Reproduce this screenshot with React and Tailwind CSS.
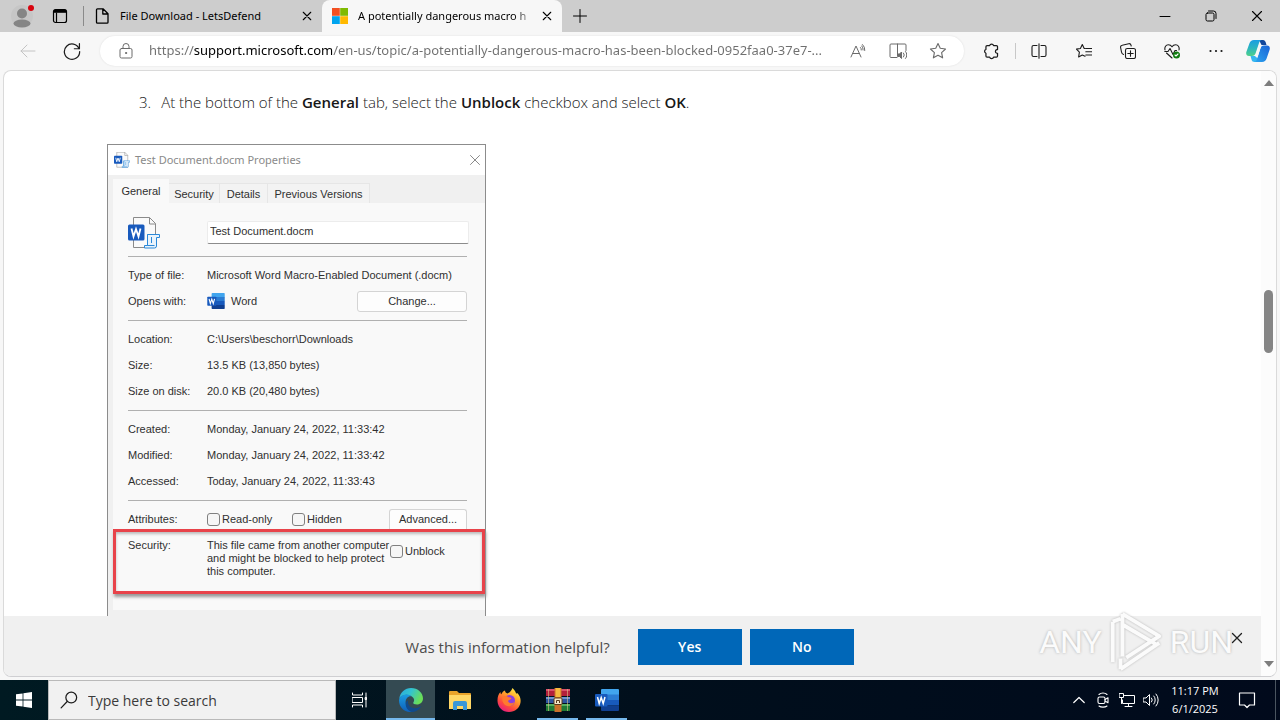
import React from 'react';

const UI = "font-['Open_Sans','Noto_Sans',sans-serif]";

function Stroke({ size = 'size-4', children, w = 1, box = '0 0 16 16', className = '' }) {
  return (
    <svg viewBox={box} className={`${size} shrink-0 ${className}`} fill="none" stroke="currentColor" strokeWidth={w} strokeLinecap="round" strokeLinejoin="round" aria-hidden="true">
      {children}
    </svg>
  );
}

function Cross({ size = 'size-3', w = 1 }) {
  return (
    <Stroke size={size} box="0 0 12 12" w={w}>
      <path d="M1.5 1.5l9 9M10.5 1.5l-9 9" />
    </Stroke>
  );
}

function WordTile({ className }) {
  return (
    <svg viewBox="0 0 24 22" className={className} aria-hidden="true">
      <path d="M7 0h16a1 1 0 0 1 1 1v5H6V1a1 1 0 0 1 1-1z" fill="#41a5ee" />
      <path d="M6 5.5h18V11H6z" fill="#2b7cd3" />
      <path d="M6 11h18v5.5H6z" fill="#185abd" />
      <path d="M6 16.5h18V21a1 1 0 0 1-1 1H7a1 1 0 0 1-1-1z" fill="#103f91" />
      <rect x="0" y="5" width="12.5" height="12.5" rx="1" fill="#185abd" />
      <path d="M2.5 8l1.7 6.5L6.2 8.500l2 6L10 8" fill="none" stroke="#fff" strokeWidth="1.5" />
    </svg>
  );
}

function DocmIcon({ className }) {
  return (
    <svg viewBox="0 0 32 32" className={className} fill="none" aria-hidden="true">
      <path d="M5.5 .5h16l6 6V30.500h-22z" fill="#fafafa" stroke="#8a8a8a" />
      <path d="M21.5 .5v6.500h6" stroke="#8a8a8a" />
      <rect x="0" y="7.500" width="16.500" height="16" rx="1.5" fill="#185abd" />
      <path d="M3.500 11.500l2 8L8 12l2.500 7.500 2-8" stroke="#fff" strokeWidth="1.800" />
      <path d="M19.500 17.500h12v3h-3v8.500a2 2 0 0 1-2 2h-10v-2.500h3z" fill="#e9f3fc" stroke="#2b88d8" />
      <path d="M19.500 17.500v11h7M23.500 20v6" stroke="#2b88d8" />
    </svg>
  );
}

function TabStrip() {
  return (
    <header className="flex h-8 shrink-0 items-stretch bg-[#cdcdcd] font-['Noto_Sans','Open_Sans',sans-serif]">
      <button aria-label="Profile" className="flex w-11 items-center justify-center">
        <svg viewBox="0 0 24 24" className="size-6" aria-hidden="true">
          <circle cx="12" cy="12" r="11" fill="#c6c6c6" />
          <circle cx="12" cy="9.5" r="5" fill="#858585" />
          <ellipse cx="12" cy="19.5" rx="8.5" ry="4" fill="#858585" />
          <circle cx="21" cy="4" r="3" fill="#d8040f" />
        </svg>
      </button>
      <button aria-label="Tab actions" className="flex w-8 items-center justify-center text-black">
        <Stroke w={1.2}>
          <rect x="1.5" y="1.5" width="13" height="13" rx="2" />
          <path d="M2 3.300h12" strokeWidth="3" strokeLinecap="butt" />
          <path d="M4.500 5v9.500" />
        </Stroke>
      </button>
      <div className="my-1.5 ml-[7px] w-px bg-[#8a8a8a]" />
      <div className="flex w-[238px] items-center pr-2.5 pl-2.5">
        <Stroke className="text-black" w={1.3}>
          <path d="M3.5 .8h5.5l5 5v8.400a1 1 0 0 1-1 1h-9.5a1 1 0 0 1-1-1V1.800a1 1 0 0 1 1-1zM8.800 1v5h5" />
        </Stroke>
        <span className="ml-2.5 flex-1 truncate text-[11px] text-black">File Download - LetsDefend</span>
        <button aria-label="Close tab" className="text-black"><Cross size="size-2.5" w={1.3} /></button>
      </div>
      <div className="flex w-60 items-center rounded-t-lg bg-[#f7f7f7] px-2.5">
        <svg viewBox="0 0 16 16" className="size-4" aria-hidden="true">
          <path d="M0 0h7.8v7.8H0z" fill="#f25022" />
          <path d="M8.200 0H16v7.8H8.200z" fill="#7fba00" />
          <path d="M0 8.200h7.8V16H0z" fill="#00a4ef" />
          <path d="M8.200 8.200H16V16H8.200z" fill="#ffb900" />
        </svg>
        <span className="ml-2.5 flex-1 overflow-hidden text-[11px] whitespace-nowrap text-black [mask-image:linear-gradient(to_right,#000_156px,transparent_178px)]">A potentially dangerous macro h</span>
        <button aria-label="Close tab" className="ml-2 text-black"><Cross size="size-2.5" w={1.3} /></button>
      </div>
      <button aria-label="New tab" className="flex w-9 items-center justify-center text-black">
        <Stroke><path d="M8 1.500v13M1.500 8h13" /></Stroke>
      </button>
      <div className="ml-auto flex text-black">
        <button aria-label="Minimize" className="flex w-[46px] items-center justify-center"><Stroke size="size-3" box="0 0 12 12"><path d="M1 6.500h10" /></Stroke></button>
        <button aria-label="Restore" className="flex w-[46px] items-center justify-center">
          <Stroke size="size-3" box="0 0 12 12"><rect x="1" y="3" width="8" height="8" rx="1.500" /><path d="M3.500 1h5a2.500 2.500 0 0 1 2.500 2.500v5" /></Stroke>
        </button>
        <button aria-label="Close" className="flex w-[46px] items-center justify-center"><Cross w={1.1} /></button>
      </div>
    </header>
  );
}

function CopilotLogo() {
  return (
    <svg viewBox="0 0 24 24" className="size-6" aria-hidden="true">
      <defs>
        <linearGradient id="cpA" x1="0" y1="0" x2="0" y2="1"><stop offset="0" stopColor="#1b9de2" /><stop offset=".5" stopColor="#2bb5c0" /><stop offset="1" stopColor="#4ed08a" /></linearGradient>
        <linearGradient id="cpB" x1="0" y1="1" x2="1" y2="0"><stop offset="0" stopColor="#2ba5ef" /><stop offset="1" stopColor="#1a62d6" /></linearGradient>
      </defs>
      <path d="M9 1h8c1.500 0 2.300 1 2.700 2.300L20.500 6h-5l-2-4z" fill="#12479c" />
      <path d="M15 23H8.500c-1.500 0-2.500-1-2.900-2.300L4.500 17h5z" fill="#35b7f0" />
      <path d="M8 1h7.500c-1.500.300-2 1.500-2.500 3l-3.300 10c-.700 2-1.700 3-3.700 3H3c-2.500 0-3.300-2-2.600-4.300L3.400 4.500C4.200 2.200 5.500 1 8 1z" fill="url(#cpA)" />
      <path d="M16 23H8.500c1.500-.300 2-1.500 2.500-3l3.300-10.500c.700-2 1.700-3 3.700-3h3c2.500 0 3.300 2 2.600 4.300l-3 8.700C19.800 21.800 18.500 23 16 23z" fill="url(#cpB)" />
      <path d="M13.800 7.500L10.600 17" stroke="#f7f7f7" strokeWidth="2.500" strokeLinecap="round" />
    </svg>
  );
}

const STAR = 'M8 1.300l2 4.300 4.700.600-3.500 3.200.900 4.700L8 11.800l-4.100 2.300.900-4.700L1.300 6.200 6 5.600z';

function IconButton({ label, children, className = 'w-[46px]' }) {
  return <button aria-label={label} className={`flex h-8 items-center justify-center ${className}`}>{children}</button>;
}

function Toolbar() {
  return (
    <nav className="flex h-[38px] shrink-0 items-center bg-[#f7f7f7] text-[#1b1b1b]">
      <IconButton label="Back" className="ml-1.5 w-11 text-[#c4c4c4]">
        <Stroke><path d="M15 8H1M7 2L1 8l6 6" /></Stroke>
      </IconButton>
      <IconButton label="Refresh" className="w-11">
        <Stroke size="size-[18px]" w={1.1}><path d="M14.300 6A6.800 6.800 0 1 0 14.800 8.500M14.600 1.500V6h-4.500" /></Stroke>
      </IconButton>
      <div className="ml-1.5 flex h-[30px] min-w-0 flex-1 items-center rounded-full bg-white pl-[18px] text-[#6b6b6b] shadow-[0_0_2px_#dcdcdc]">
        <Stroke><rect x="2" y="5.500" width="12" height="9.500" rx="1.500" /><path d="M5 5.500V3.500a3 3 0 0 1 6 0v2" /><circle cx="8" cy="10" r=".6" fill="currentColor" /></Stroke>
        <input
          aria-label="Address"
          className="ml-[15px] min-w-0 flex-1 bg-[linear-gradient(to_right,#6f6f6f_45px,#000_45px,#000_184px,#6f6f6f_184px)] bg-clip-text font-['Noto_Sans','Open_Sans',sans-serif] text-[13px] text-transparent outline-none"
          defaultValue="https://support.microsoft.com/en-us/topic/a-potentially-dangerous-macro-has-been-blocked-0952faa0-37e7-..."
        />
        <IconButton label="Read aloud" className="w-10">
          <Stroke><path d="M1 14L6 3l5 11M2.800 10.500h6.400M10.500 4.500a3 3 0 0 1 .8 2.500M12.500 1.500a7 7 0 0 1 2.300 6M11.800 3a5 5 0 0 1 1.300 4" /></Stroke>
        </IconButton>
        <IconButton label="Immersive reader" className="w-10">
          <Stroke size="size-[18px]" box="0 0 18 18"><path d="M8.500 2v12M8 15.500H2a1 1 0 0 1-1-1V3a1 1 0 0 1 1-1h14a1 1 0 0 1 1 1v5.500M14.500 11a3 3 0 0 1 0 4M16.500 9.500a5 5 0 0 1 0 7" /><path d="M9 12h1.500l2-2v6.500l-2-2H9z" fill="currentColor" /></Stroke>
        </IconButton>
        <IconButton label="Favorite this page" className="mr-1.5 w-10">
          <Stroke size="size-[18px]"><path d={STAR} /></Stroke>
        </IconButton>
      </div>
      <IconButton label="Extensions" className="ml-1 w-[46px]">
        <Stroke size="size-[18px]" w={1.1}><path d="M4.500 3.200h2.300a1.800 1.800 0 0 1 3.500 0h2.500a1 1 0 0 1 1 1v2.500h-.6a1.700 1.700 0 0 0 0 3.300h.6v2.500a1 1 0 0 1-1 1h-2.500a1.800 1.800 0 0 1-3.500 0H4.500a1 1 0 0 1-1-1V10a1.800 1.800 0 0 1 0-3.400V4.200a1 1 0 0 1 1-1z" /></Stroke>
      </IconButton>
      <div className="ml-px h-4 w-px bg-[#c8c8c8]" />
      <IconButton label="Split screen">
        <Stroke w={1.1}><path d="M6 2.500H2.500a1.500 1.500 0 0 0-1.500 1.500v8a1.500 1.500 0 0 0 1.500 1.500H6M10 2.500h3.500A1.500 1.500 0 0 1 15 4v8a1.500 1.500 0 0 1-1.500 1.500H10M8 .8v14.400" /></Stroke>
      </IconButton>
      <IconButton label="Favorites" className="w-11">
        <Stroke w={1.1}><path d="M9 5.500H8.200L6.300 1.500 4.400 5.500l-4 .6 3 3-.8 4.900 3.700-2L9 13.200M9.800 5.500h6M9.800 8.800h6M9.800 12h6" /></Stroke>
      </IconButton>
      <IconButton label="Collections" className="w-11">
        <Stroke w={1.1}><rect x="5.500" y="5.500" width="10" height="10" rx="1.800" /><path d="M10.500 7.800v5.400M7.800 10.500h5.400M3.500 11.500A3 3 0 0 1 1.500 9L.6 4.500a2 2 0 0 1 1.600-2.300l6.500-1.500a2 2 0 0 1 2.300 1.500l.2.800" /></Stroke>
      </IconButton>
      <IconButton label="Browser essentials" className="w-11">
        <Stroke w={1.1}><path d="M1 7C.3 4 2 1.800 4.300 1.800c1.700 0 3 .9 3.700 2 .7-1.100 2-2 3.700-2C14 1.800 15.700 4 15 7M2.500 10L8 15M.8 8.500H4L6 5.500l3 6 2-4h1.500" /><circle cx="12.500" cy="12" r="3.500" fill="#107c10" stroke="none" /><path d="M11 12l1 1 2-2" stroke="#fff" /></Stroke>
      </IconButton>
      <IconButton label="Settings and more" className="w-11">
        <Stroke><path d="M2.500 8h.01M8 8h.01M13.500 8h.01" strokeWidth="2.200" /></Stroke>
      </IconButton>
      <IconButton label="Copilot" className="w-10"><CopilotLogo /></IconButton>
      <div className="w-0.5" />
    </nav>
  );
}

function Row({ label, children }) {
  return (
    <div className="flex h-[26px] items-center">
      <dt className="w-[79px]">{label}</dt>
      <dd className="flex flex-1 items-center">{children}</dd>
    </div>
  );
}

const section = 'border-t border-[#b0b0b0] pt-[5px] pb-1.5';

function Check({ label }) {
  return (
    <label className="flex items-center gap-0.5">
      <input type="checkbox" className="size-[13px] appearance-none rounded-[3px] border border-[#808080] bg-[#f6f6f6]" />
      {label}
    </label>
  );
}

function PropertiesDialog() {
  return (
    <section aria-label="Test Document.docm Properties" className="ml-[103px] w-[379px] border border-[#8c8c8c] bg-[#f0f0f0] font-['Liberation_Sans',Arial,sans-serif] text-[11px] text-[#303030]">
      <div className="flex h-[30px] items-center bg-white pr-1 pl-1.5 text-[#8a8a8a]">
        <DocmIcon className="size-4" />
        <h2 className="ml-[5px] flex-1 font-['Noto_Sans',sans-serif] text-[11px]">Test Document.docm Properties</h2>
        <button aria-label="Close dialog"><Cross /></button>
      </div>
      <div className="flex items-end pt-1 pl-[5px]">
        <button className="h-6 w-14 bg-[#f9f9f9]">General</button>
        <button className="h-5 w-[51px] border-t border-r border-[#e6e6e6] bg-[#f3f3f3] pt-0.5">Security</button>
        <button className="h-5 w-12 border-t border-r border-[#e6e6e6] bg-[#f3f3f3] pt-0.5">Details</button>
        <button className="h-5 w-[102px] border-t border-r border-[#e6e6e6] bg-[#f3f3f3] pt-0.5">Previous Versions</button>
      </div>
      <div className="ml-[5px] bg-[#f9f9f9] pb-4">
        <div className="flex items-center pt-2.5 pr-4 pb-1 pl-[15px]">
          <DocmIcon className="size-8" />
          <input aria-label="File name" defaultValue="Test Document.docm" className="my-2 ml-[47px] h-[23px] min-w-0 flex-1 rounded-xs border border-[#ececec] border-b-[#8c8c8c] bg-white px-0.5 pb-1 outline-none" />
        </div>
        <dl className="pr-[18px] pl-[15px]">
          <div className={section}>
            <Row label="Type of file:">Microsoft Word Macro-Enabled Document (.docm)</Row>
            <Row label="Opens with:">
              <WordTile className="mr-1.5 h-4 w-[18px]" />
              <span className="flex-1">Word</span>
              <button className="h-[21px] w-[110px] rounded-[3px] border border-[#d4d4d4] bg-[#fdfdfd]">Change...</button>
            </Row>
          </div>
          <div className={section}>
            <Row label="Location:">C:\Users\beschorr\Downloads</Row>
            <Row label="Size:">13.5 KB (13,850 bytes)</Row>
            <Row label="Size on disk:">20.0 KB (20,480 bytes)</Row>
          </div>
          <div className={section}>
            <Row label="Created:">Monday, January 24, 2022, 11:33:42</Row>
            <Row label="Modified:">Monday, January 24, 2022, 11:33:42</Row>
            <Row label="Accessed:">Today, January 24, 2022, 11:33:43</Row>
          </div>
          <div className="border-t border-[#b0b0b0] pt-2">
            <div className="flex h-5 items-center">
              <dt className="w-[79px]">Attributes:</dt>
              <dd className="flex flex-1 items-center">
                <span className="w-[85px]"><Check label="Read-only" /></span>
                <Check label="Hidden" />
                <button className="ml-auto h-5 w-[78px] rounded-t-[3px] border border-b-0 border-[#d4d4d4] bg-[#fdfdfd]">Advanced...</button>
              </dd>
            </div>
          </div>
        </dl>
        <dl className="flex h-[65px] border-3 border-[#e8434a] pt-[7px] pl-3 leading-[13px] shadow-[1px_3px_3px_#999,inset_0_2px_3px_#bbb]">
          <dt className="w-[79px]">Security:</dt>
          <dd className="flex flex-1 items-start">
            <p className="w-[183px]">This file came from another computer and might be blocked to help protect this computer.</p>
            <div className="pt-1.5"><Check label="Unblock" /></div>
          </dd>
        </dl>
      </div>
      <div className="h-10" />
    </section>
  );
}

function Watermark() {
  return (
    <div className="pointer-events-none absolute right-[28px] bottom-0.5 flex items-center gap-1 font-['Roboto',sans-serif] text-[32px] leading-none text-[#fbfbfb] [text-shadow:0_0_3px_#b0b0b0]">
      <span>ANY</span>
      <svg viewBox="0 0 60 66" className="h-[64px] w-[60px] drop-shadow-[0_0_1px_#b5b5b5]" fill="none" stroke="#fbfbfb" strokeWidth="4" strokeLinejoin="round" aria-hidden="true">
        <path d="M6 12v42M16 4v44M16 4l38 23-34 22M16 15l34 20M6 12l8-3M14 61l40-27M14 61V50" />
      </svg>
      <span>RUN</span>
    </div>
  );
}

function ScrollTrack() {
  return (
    <div className="flex w-[15px] shrink-0 flex-col items-center bg-[#fcfcfc] py-[9px]" aria-hidden="true">
      <svg viewBox="0 0 10 6" className="h-1.5 w-2.5"><path d="M5 0l5 6H0z" fill="#7d7d7d" /></svg>
      <div className="flex-[203]" />
      <div className="h-[63px] w-[9px] rounded-full bg-[#858585]" />
      <div className="flex-[306]" />
      <svg viewBox="0 0 10 6" className="h-1.5 w-2.5"><path d="M5 6l5-6H0z" fill="#7d7d7d" /></svg>
    </div>
  );
}

function Page() {
  return (
    <div className="flex min-h-0 flex-1 bg-[#f7f7f7] px-[3px] pb-[3px]">
      <div className="flex min-w-0 flex-1 overflow-hidden rounded-lg border border-[#dadada] border-b-[#cfcfd2] bg-white">
        <div className="relative flex min-w-0 flex-1 flex-col">
          <main className="min-h-0 flex-1 overflow-hidden">
            <ol start="3" className="pt-[19px] pb-[30px] pl-[135px] text-[15px] leading-6 font-light text-[#171717]">
              <li className="flex gap-2.5"><span>3.</span><p>At the bottom of the <b className="font-semibold">General</b> tab, select the <b className="font-semibold">Unblock</b> checkbox and select <b className="font-semibold">OK</b>.</p></li>
            </ol>
            <PropertiesDialog />
          </main>
          <div className="flex items-center justify-center bg-[#f0f0f0] pt-[13px] pr-1.5 pb-[11px] text-[15px] leading-6 text-[#4c4c4c]">
            <p className="mr-7">Was this information helpful?</p>
            <button className="mr-2 h-9 w-[104px] bg-[#0067b8] text-[14px] font-semibold text-white">Yes</button>
            <button className="h-9 w-[104px] bg-[#0067b8] text-[14px] font-semibold text-white">No</button>
          </div>
          <Watermark />
          <button aria-label="Dismiss" className="absolute right-[18px] bottom-8 text-[#1f1f1f]"><Cross w={1.3} /></button>
        </div>
        <ScrollTrack />
      </div>
    </div>
  );
}

function EdgeLogo() {
  return (
    <svg viewBox="0 0 24 24" className="size-6" aria-hidden="true">
      <defs>
        <linearGradient id="edA" x1="0" y1="0" x2="1" y2=".4"><stop offset="0" stopColor="#2aa9dc" /><stop offset=".5" stopColor="#33c3d0" /><stop offset="1" stopColor="#6ade58" /></linearGradient>
        <linearGradient id="edB" x1="0" y1="0" x2="0" y2="1"><stop offset="0" stopColor="#1b9de2" /><stop offset="1" stopColor="#0f5fb8" /></linearGradient>
      </defs>
      <path d="M.3 10.500C1.200 4.500 6 0 12 0c7 0 12 5 12 10.500 0 3.800-3 6-6 6-2.500 0-4.300-1-3.700-2 1.200-1.500 1.200-3.500-.3-5C10 5.500 3.500 6 .3 10.500z" fill="url(#edA)" />
      <path d="M.3 10.500C2.500 6.500 9 5 12.500 8.200c-4-.5-6.500 3.300-5.800 7 .8 4.300 4 7.500 8 8C7 26 0 20 0 12.500z" fill="url(#edB)" />
      <path d="M9 12.500c-.8 5 3.500 8.500 8.500 7.500 2-.4 3.500-1.200 4.700-2C20.500 21.500 17 24 13 24c-4-1-6.700-5-6.300-8.500.2-1.700 1-2.500 2.300-3z" fill="#114a8b" />
    </svg>
  );
}

function FolderLogo() {
  return (
    <svg viewBox="0 0 24 22" className="h-[22px] w-6" aria-hidden="true">
      <path d="M1 3a1 1 0 0 1 1-1h7l2 2h11a1 1 0 0 1 1 1v15H1z" fill="#e9a32a" />
      <path d="M1 6h22v14H1z" fill="#ffd766" />
      <path d="M5 20v-6a2 2 0 0 1 2-2h10a2 2 0 0 1 2 2v7h-4v-4H9v4H5z" fill="#3a97d8" />
    </svg>
  );
}

function FirefoxLogo() {
  return (
    <svg viewBox="0 0 24 24" className="size-6" aria-hidden="true">
      <defs>
        <linearGradient id="ffA" x1=".8" y1="0" x2=".2" y2="1"><stop offset="0" stopColor="#fff04a" /><stop offset=".35" stopColor="#ffa52a" /><stop offset=".7" stopColor="#ff4a3d" /><stop offset="1" stopColor="#e3168a" /></linearGradient>
      </defs>
      <path d="M15.500 0c2 2 3 3.500 3.500 5.200.7.400 1.300.5 1.500-.2 2.500 3 3.500 6 3 9.500C22.700 20 18 24 12 24 5.500 24 .7 19.200.5 13 .4 9 1.500 6 3.500 4c0 1.200.3 1.800.8 2.300C5.200 4.300 6.500 3 8 2.500 8 4 9 5 10.500 5.500 12.500 4.500 14.500 3 15.500 0z" fill="url(#ffA)" />
      <circle cx="12.500" cy="12.500" r="5.500" fill="#8a3fe0" />
      <path d="M5.500 9c2-1.500 4.500-1 6 .3 2 0 3 .7 2.800 1.500-.8 1-2.300 1-3.300 2 0 2 3.500 3.500 6.500 1.200-1.500 4-5 5-8 3.800C6.200 16.300 4.700 12.500 5.500 9z" fill="#ff7a2e" />
    </svg>
  );
}

function WinrarLogo() {
  return (
    <svg viewBox="0 0 24 24" className="size-6" aria-hidden="true">
      <path d="M0 1h24v7H0z" fill="#b3203c" /><path d="M0 1h24v2H0z" fill="#d8506a" />
      <path d="M0 9h24v6H0z" fill="#2d559f" /><path d="M0 9h24v2H0z" fill="#6f93cf" />
      <path d="M0 16h24v7H0z" fill="#1f7a35" /><path d="M0 16h24v2H0z" fill="#55b05e" />
      <path d="M2.500 1v22M21.500 1v22" stroke="#d9c48a" strokeOpacity=".6" />
      <path d="M8.500 0h7v24h-7z" fill="#c9702a" /><path d="M9.500 0h5v9h-5z" fill="#f6b93f" />
      <rect x="8" y="10" width="8" height="6.500" rx="1" fill="#f4e6c8" stroke="#5a3a1a" />
      <path d="M10.500 15v-2.500h3V15" stroke="#5a3a1a" fill="none" />
    </svg>
  );
}

function TaskButton({ label, active, open, children }) {
  return (
    <button aria-label={label} className={`relative flex w-[49px] items-center justify-center ${active ? 'bg-[#344a52]' : ''}`}>
      {children}
      {active && <span className="absolute inset-x-0 bottom-0 h-0.5 bg-[#76b9ed]" />}
      {open && <span className="absolute inset-x-1 bottom-0 h-0.5 bg-[#76b9ed]" />}
    </button>
  );
}

function Taskbar() {
  return (
    <footer className="flex h-10 shrink-0 bg-linear-to-r from-[#001a22] via-[#010f1c] to-[#010a1c] text-white">
      <button aria-label="Start" className="flex w-12 items-center justify-center">
        <svg viewBox="0 0 16 16" className="size-4" fill="#fff" aria-hidden="true"><path d="M0 2.300L6.600 1.400v6.200H0zM7.400 1.300L16 0v7.600H7.400zM0 8.400h6.600v6.200L0 13.700zM7.400 8.400H16V16l-8.600-1.300z" /></svg>
      </button>
      <label className="flex w-72 items-center border border-[#b9b9b9] bg-[#f1f1f1] pl-[11px] text-[#1b1b1b]">
        <Stroke size="size-[18px]" w={1.1}><circle cx="10" cy="5.800" r="4.800" /><path d="M6.400 9.300L1 15" /></Stroke>
        <input aria-label="Search" placeholder="Type here to search" className="ml-2.5 min-w-0 flex-1 bg-transparent text-[14px] outline-none placeholder:text-[#3a3a3a]" />
      </label>
      <button aria-label="Task view" className="mr-0.5 flex w-12 items-center justify-center">
        <Stroke><path d="M.5 1v2h10V1M.5 15v-2h10v2M.5 5.500h10v5H.5zM14 1v14" /><path d="M13.500 5.500h1v2h-1z" fill="currentColor" /></Stroke>
      </button>
      <TaskButton label="Microsoft Edge" active><EdgeLogo /></TaskButton>
      <TaskButton label="File Explorer"><FolderLogo /></TaskButton>
      <TaskButton label="Firefox"><FirefoxLogo /></TaskButton>
      <TaskButton label="WinRAR" open><WinrarLogo /></TaskButton>
      <TaskButton label="Word" open><WordTile className="h-[22px] w-6" /></TaskButton>
      <div className="ml-auto flex items-center">
        <button aria-label="Show hidden icons" className="flex w-6 justify-center"><Stroke size="size-3" box="0 0 12 12" w={1.2}><path d="M.8 8.500L6 3.500l5.200 5" /></Stroke></button>
        <button aria-label="Meet now" className="flex w-6 justify-center"><Stroke w={1.1}><rect x="3" y="5" width="7" height="6.500" rx="1.500" /><path d="M10 7.500l3-1.700v5l-3-1.700M4 2.500C6 .5 10 .5 12 2.500M4 14c2 1.500 6 1.500 8 0" /></Stroke></button>
        <button aria-label="Network" className="flex w-6 justify-center"><Stroke><path d="M5.500 3.500h10v8H3.500V8M9.500 11.500v3M6 14.500h7M.5 1.500h4v4h-4zM2.500 5.500v6" /></Stroke></button>
        <button aria-label="Volume" className="flex w-6 justify-center"><Stroke><path d="M.5 6h2.500l3.500-3.500v11L3 10H.5zM8.500 6a3 3 0 0 1 0 4M10.800 4a6 6 0 0 1 0 8M13 2a9 9 0 0 1 0 12" /></Stroke></button>
        <button className="w-16 text-center text-[11px] leading-[18px]"><span className="block whitespace-nowrap">11:17 PM</span><span className="block whitespace-nowrap">6/1/2025</span></button>
        <button aria-label="Notifications" className="flex w-10 justify-center"><Stroke size="size-[18px]" box="0 0 18 18" w={1.2}><path d="M1.500 2h15v12h-5L9 16.500 6.500 14h-5z" /></Stroke></button>
        <div className="ml-2 h-10 w-[5px] border-l border-[#4a5560]" />
      </div>
    </footer>
  );
}

export default function App() {
  return (
    <div className={`flex h-screen flex-col overflow-hidden ${UI}`}>
      <TabStrip />
      <Toolbar />
      <Page />
      <Taskbar />
    </div>
  );
}
